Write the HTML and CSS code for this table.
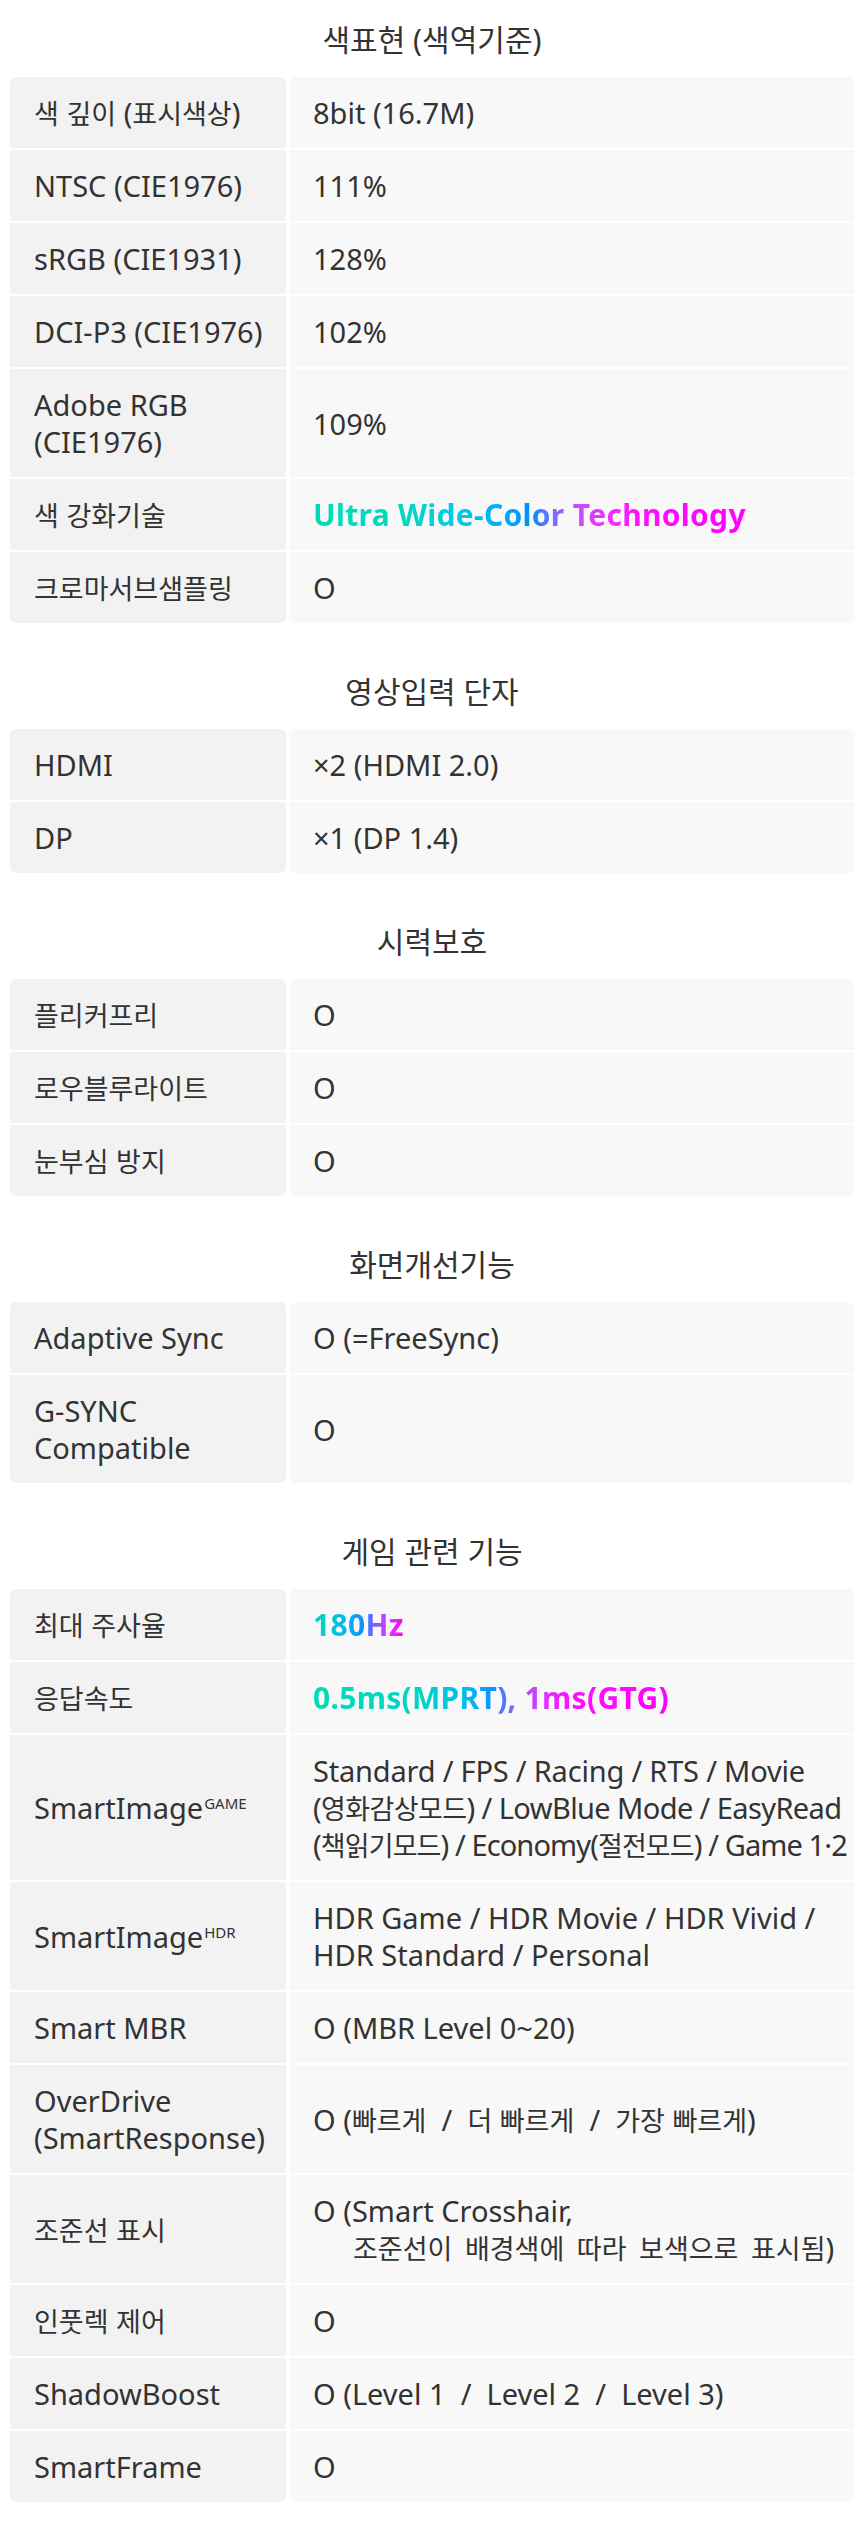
FILE: index.html
```html
<!DOCTYPE html>
<html lang="ko">
<head>
<meta charset="utf-8">
<title>사양</title>
<link rel="stylesheet" href="styles.css">
</head>
<body>
<div class="page">

  <section class="sec">
    <h2 class="sec-title">색표현 (색역기준)</h2>
    <div class="spec">
      <div class="k"><span class="t"><span class="ko">색 깊이</span> (<span class="ko">표시색상</span>)</span></div>
      <div class="v"><span class="t">8bit (16.7M)</span></div>
      <div class="k"><span class="t">NTSC (CIE1976)</span></div>
      <div class="v"><span class="t">111%</span></div>
      <div class="k"><span class="t">sRGB (CIE1931)</span></div>
      <div class="v"><span class="t">128%</span></div>
      <div class="k"><span class="t">DCI-P3 (CIE1976)</span></div>
      <div class="v"><span class="t">102%</span></div>
      <div class="k"><span class="t">Adobe RGB<br>(CIE1976)</span></div>
      <div class="v"><span class="t">109%</span></div>
      <div class="k"><span class="t ko">색 강화기술</span></div>
      <div class="v"><span class="t grad grad-uwc">Ultra Wide-Color Technology</span></div>
      <div class="k"><span class="t ko">크로마서브샘플링</span></div>
      <div class="v"><span class="t">O</span></div>
    </div>
  </section>

  <section class="sec">
    <h2 class="sec-title">영상입력 단자</h2>
    <div class="spec">
      <div class="k"><span class="t">HDMI</span></div>
      <div class="v"><span class="t">×2 (HDMI 2.0)</span></div>
      <div class="k"><span class="t">DP</span></div>
      <div class="v"><span class="t">×1 (DP 1.4)</span></div>
    </div>
  </section>

  <section class="sec">
    <h2 class="sec-title">시력보호</h2>
    <div class="spec">
      <div class="k"><span class="t ko">플리커프리</span></div>
      <div class="v"><span class="t">O</span></div>
      <div class="k"><span class="t ko">로우블루라이트</span></div>
      <div class="v"><span class="t">O</span></div>
      <div class="k"><span class="t ko">눈부심 방지</span></div>
      <div class="v"><span class="t">O</span></div>
    </div>
  </section>

  <section class="sec">
    <h2 class="sec-title">화면개선기능</h2>
    <div class="spec">
      <div class="k"><span class="t">Adaptive Sync</span></div>
      <div class="v"><span class="t">O (=FreeSync)</span></div>
      <div class="k"><span class="t">G-SYNC<br>Compatible</span></div>
      <div class="v"><span class="t">O</span></div>
    </div>
  </section>

  <section class="sec">
    <h2 class="sec-title">게임 관련 기능</h2>
    <div class="spec">
      <div class="k"><span class="t ko">최대 주사율</span></div>
      <div class="v"><span class="t grad grad-hz">180Hz</span></div>
      <div class="k"><span class="t ko">응답속도</span></div>
      <div class="v"><span class="t grad grad-ms">0.5ms(MPRT), 1ms(GTG)</span></div>
      <div class="k"><span class="t">SmartImage<sup class="sup">GAME</sup></span></div>
      <div class="v"><span class="t"><span class="ln ln-a">Standard / FPS / Racing / RTS / Movie</span><span class="ln ln-b">(<span class="ko">영화감상모드</span>) / LowBlue Mode / EasyRead</span><span class="ln ln-c">(<span class="ko">책읽기모드</span>) / Economy(<span class="ko">절전모드</span>) / Game 1·2</span></span></div>
      <div class="k"><span class="t">SmartImage<sup class="sup">HDR</sup></span></div>
      <div class="v"><span class="t">HDR Game / HDR Movie / HDR Vivid /<br>HDR Standard / Personal</span></div>
      <div class="k"><span class="t">Smart MBR</span></div>
      <div class="v"><span class="t">O (MBR Level 0~20)</span></div>
      <div class="k"><span class="t">OverDrive<br>(SmartResponse)</span></div>
      <div class="v"><span class="t">O (<span class="ko">빠르게</span>&nbsp; / &nbsp;<span class="ko">더 빠르게</span>&nbsp; / &nbsp;<span class="ko">가장 빠르게</span>)</span></div>
      <div class="k"><span class="t ko">조준선 표시</span></div>
      <div class="v"><span class="t">O (Smart Crosshair,<br><span class="indent ko">조준선이 배경색에 따라 보색으로 표시됨</span>)</span></div>
      <div class="k"><span class="t ko">인풋렉 제어</span></div>
      <div class="v"><span class="t">O</span></div>
      <div class="k"><span class="t">ShadowBoost</span></div>
      <div class="v"><span class="t">O (Level 1&nbsp; / &nbsp;Level 2&nbsp; / &nbsp;Level 3)</span></div>
      <div class="k"><span class="t">SmartFrame</span></div>
      <div class="v"><span class="t">O</span></div>
    </div>
  </section>

</div>
</body>
</html>
```

FILE: styles.css
```css
* { box-sizing: border-box; }

html, body {
  margin: 0;
  padding: 0;
  background: #ffffff;
}

body {
  font-family: "Noto Sans", "Noto Sans CJK KR", sans-serif;
  color: #333333;
}

.page {
  padding: 20px 6px 22px 10px;
  display: flex;
  flex-direction: column;
  gap: 49px;
}

.sec {
  display: flex;
  flex-direction: column;
}

.sec-title {
  margin: 0 0 17px;
  font-family: "Noto Sans", "Noto Sans CJK KR", sans-serif;
  font-size: 30px;
  line-height: 40px;
  font-weight: 400;
  text-align: center;
  color: #333333;
}

.spec {
  display: grid;
  grid-template-columns: 276px 1fr;
  column-gap: 4px;
  row-gap: 2px;
}

.k, .v {
  display: flex;
  align-items: center;
  min-height: 71px;
  padding: 17px 4px 17px 24px;
  font-size: 29px;
  line-height: 37px;
  white-space: nowrap;
}

.k {
  background: #f2f2f2;
}

.v {
  background: #f8f8f8;
  padding-left: 23px;
}

.t {
  display: block;
}

.ko {
  font-family: "Noto Sans CJK KR", "Noto Sans", sans-serif;
  font-size: 27px;
}

.spec > :nth-child(1),
.spec > :nth-child(2) {
  border-top-left-radius: 6px;
  border-top-right-radius: 6px;
}

.spec > :nth-last-child(1),
.spec > :nth-last-child(2) {
  border-bottom-left-radius: 6px;
  border-bottom-right-radius: 6px;
}

.sup {
  font-size: 15px;
  line-height: 0;
  vertical-align: 10px;
  margin-left: 1px;
}

.ln {
  display: block;
}

.ln-a { letter-spacing: -0.2px; }
.ln-b { letter-spacing: -0.6px; }
.ln-c { letter-spacing: -0.9px; }

.indent {
  display: inline-block;
  padding-left: 40px;
  word-spacing: 5px;
}

.grad {
  font-size: 30px;
  font-weight: 700;
  letter-spacing: 0.3px;
  -webkit-background-clip: text;
  background-clip: text;
  -webkit-text-fill-color: transparent;
  color: transparent;
}

.grad-uwc {
  background-image: linear-gradient(90deg, #00dcb4 0%, #00d8c4 20%, #00cde0 33%, #00b8f4 40%, #00a4ff 45%, #0090ff 50%, #7070ff 55%, #c050ff 60%, #f030ff 68%, #ff10ff 75%, #ff00ff 100%);
}

.grad-hz {
  background-image: linear-gradient(90deg, #00dcb8 0%, #00c0e8 30%, #1090ff 55%, #a050ff 72%, #e030ff 85%, #ff00f0 100%);
}

.grad-ms {
  background-image: linear-gradient(90deg, #00dcb4 0%, #00d4c4 30%, #00c0e8 42%, #0898ff 50%, #6070ff 54%, #a050ff 58%, #d838ff 64%, #ff10ff 72%, #ff00ff 100%);
}
```
